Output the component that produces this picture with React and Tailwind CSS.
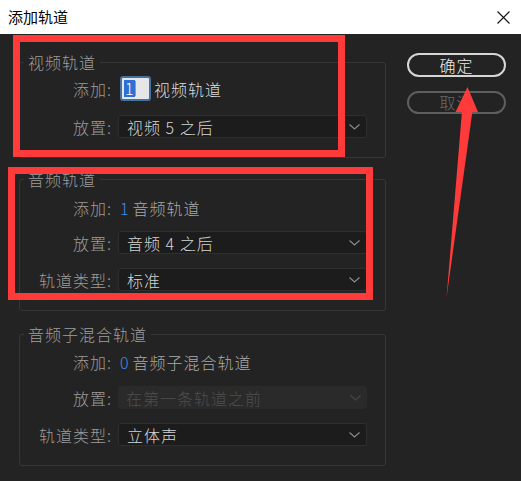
import React from 'react';

const Chevron = ({ color = '#8a8a8a' }) => (
  <svg width="11" height="6" viewBox="0 0 11 6" fill="none">
    <path d="M0.5 0.5 L5.5 5 L10.5 0.5" stroke={color} strokeWidth="1.2" />
  </svg>
);

const Label = ({ children }) => (
  <span className="w-[92px] text-right text-[#9b9b9b] shrink-0">{children}</span>
);

const Select = ({ value, disabled = false }) => (
  <div
    className={`ml-[6px] w-[249px] h-[23px] rounded-[3px] flex items-center justify-between pl-2 pr-[6px] ${
      disabled ? 'bg-[#2a2a2a] text-[#4e4e4e]' : 'bg-[#1c1c1c] border border-[#2f2f2f] text-[#d6d6d6]'
    }`}
  >
    <span>{value}</span>
    <Chevron color={disabled ? '#464646' : '#8a8a8a'} />
  </div>
);

const Group = ({ title, className = '', children }) => (
  <fieldset className={`border border-[#363636] rounded-[3px] pb-[19px] ${className}`}>
    <legend className="ml-[4px] px-[4px] h-[20px] leading-[20px] text-[#9e9e9e]">{title}</legend>
    {children}
  </fieldset>
);

export default function App() {
  return (
    <div className="relative w-[521px] h-[481px] bg-[#232323] overflow-hidden text-[16px] leading-[20px] font-light tracking-[1px] font-['Noto_Sans_CJK_SC','Noto_Sans',sans-serif]">
      {/* window title bar */}
      <header className="h-[34px] bg-white flex items-center justify-between pl-2 pr-3">
        <span className="text-[15px] text-black font-normal tracking-normal">添加轨道</span>
        <svg width="13" height="13" viewBox="0 0 13 13" className="mr-[-1px]">
          <path d="M0.5 0.5 L12.5 12.5 M12.5 0.5 L0.5 12.5" stroke="#111" strokeWidth="1.1" />
        </svg>
      </header>

      <div className="flex pl-[19px] pt-[18px]">
        <div className="w-[367px] flex flex-col">
          <Group title="视频轨道">
            <div className="mt-[4px] h-[25px] flex items-center">
              <Label>添加:</Label>
              <div className="ml-[8px] w-[31px] h-[25px] rounded-[3px] border-2 border-[#4470a2] bg-[#e6e6e6] flex items-center pl-[2px] tracking-normal">
                <span className="bg-[#2f6fd3] text-white h-[17px] leading-[17px] px-[1px]">1</span>
                <span className="w-[1px] h-[15px] bg-[#e08a2c]" />
              </div>
              <span className="ml-[3px] text-[#dedede]">视频轨道</span>
            </div>
            <div className="mt-[14px] flex items-center">
              <Label>放置:</Label>
              <Select value="视频 5 之后" />
            </div>
          </Group>

          <Group title="音频轨道" className="mt-[11px]">
            <div className="mt-[7px] h-[23px] flex items-center">
              <Label>添加:</Label>
              <span className="ml-[8px] text-[#3b8eea]">1</span>
              <span className="ml-[3px] text-[#a9a9a9]">音频轨道</span>
            </div>
            <div className="mt-[12px] flex items-center">
              <Label>放置:</Label>
              <Select value="音频 4 之后" />
            </div>
            <div className="mt-[14px] flex items-center">
              <Label>轨道类型:</Label>
              <Select value="标准" />
            </div>
          </Group>

          <Group title="音频子混合轨道" className="mt-[13px]">
            <div className="mt-[6px] h-[23px] flex items-center">
              <Label>添加:</Label>
              <span className="ml-[8px] text-[#3b8eea]">0</span>
              <span className="ml-[3px] text-[#a9a9a9]">音频子混合轨道</span>
            </div>
            <div className="mt-[13px] flex items-center">
              <Label>放置:</Label>
              <Select value="在第一条轨道之前" disabled />
            </div>
            <div className="mt-[14px] flex items-center">
              <Label>轨道类型:</Label>
              <Select value="立体声" />
            </div>
          </Group>
        </div>

        <div className="ml-[21px] mt-[1px] flex flex-col gap-[14px]">
          <button className="w-[99px] h-[24px] rounded-full border-2 border-[#d6d6d6] text-[#ececec] leading-[18px]">
            确定
          </button>
          <button className="w-[99px] h-[23px] rounded-full border-2 border-[#5e5e5e] text-[#6c6c6c] leading-[17px]">
            取消
          </button>
        </div>
      </div>

      {/* annotation marks */}
      <div className="absolute left-[13px] top-[35px] w-[332px] h-[122px] border-[7px] border-[#fe3a3a] pointer-events-none" />
      <div className="absolute left-[8px] top-[167px] w-[365px] h-[133px] border-[7px] border-[#fe3a3a] pointer-events-none" />
      <svg className="absolute left-0 top-0 pointer-events-none" width="521" height="481">
        <polygon points="467.5,87 455.5,112 478,112" fill="#fe3a3a" />
        <polygon points="462,111 472.5,111 446.5,298" fill="#fe3a3a" />
      </svg>
    </div>
  );
}
